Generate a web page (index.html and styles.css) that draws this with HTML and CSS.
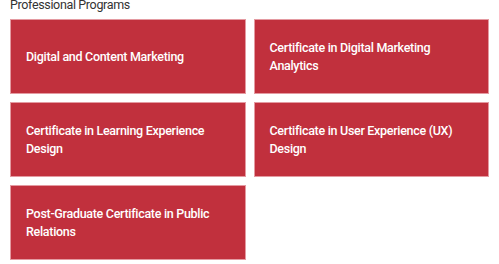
FILE: index.html
```html
<!DOCTYPE html>
<html lang="en">
<head>
  <meta charset="UTF-8">
  <title>Professional Programs</title>
  <meta name="viewport" content="width=device-width, initial-scale=1.0" />
  <link rel="stylesheet" href="styles.css">
</head>
<body>
  <div class="programs">
    <h2>Professional Programs</h2>
    <div class="grid">
      <a class="card" href="#">Digital and Content Marketing</a>
      <a class="card" href="#">Certificate in Digital Marketing Analytics</a>
      <a class="card" href="#">Certificate in Learning Experience Design</a>
      <a class="card" href="#">Certificate in User Experience (UX) Design</a>
      <a class="card" href="#">Post-Graduate Certificate in Public Relations</a>
    </div>
  </div>
</body>
</html>
```

FILE: styles.css
```css
body {
  font-family: Roboto, Arial, sans-serif;
  background: white;
  margin: 0;
  padding: 0;
}
.programs {
  padding: 0 10px;
}
h2 {
  font-size: 12.5px;
  font-weight: normal;
  color: #333;
  line-height: 16px;
  letter-spacing: -0.35px;
  margin: -3px 0 6px;
}
.grid {
  display: grid;
  grid-template-columns: 1fr 1fr;
  gap: 8px;
}
.card {
  display: flex;
  align-items: center;
  height: 75px;
  box-sizing: border-box;
  padding: 0 15px;
  background: #c1303d;
  border: 1px solid #e49aa1;
  color: white;
  font-size: 12.5px;
  font-weight: 500;
  line-height: 18px;
  letter-spacing: -0.3px;
  text-decoration: none;
}
```
